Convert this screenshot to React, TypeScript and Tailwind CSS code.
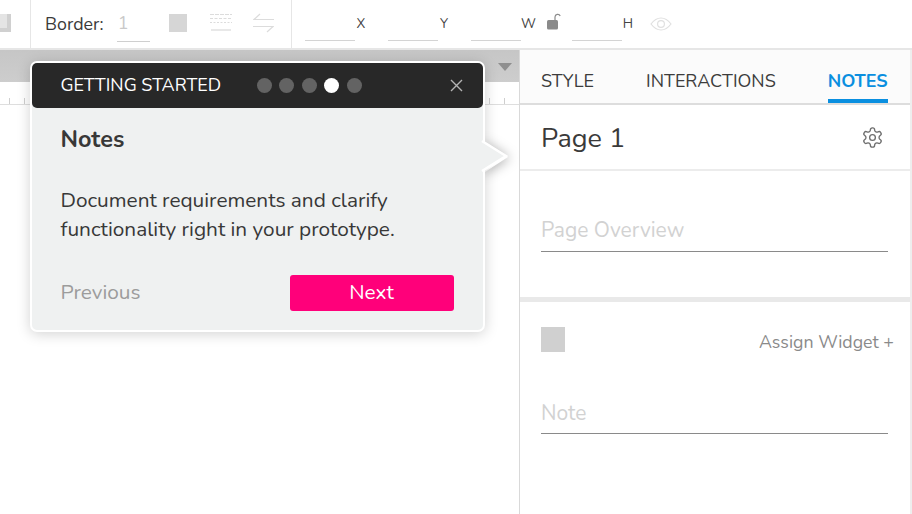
import React from "react";

const font = { fontFamily: '"Nunito","Lato","Open Sans",sans-serif' };

function Field({ label, w = "w-[50px]" }: { label: string; w?: string }) {
  return (
    <div className="flex items-center">
      <div className={`${w} h-[35px] border-b border-[#d4d4d4]`} />
      <span className="w-[12px] text-center text-[13.5px] leading-none text-[#444]">{label}</span>
    </div>
  );
}

function Toolbar() {
  return (
    <div className="flex h-[50px] shrink-0 border-b-2 border-[#e6e6e6] bg-white">
      <div className="relative w-[31px] border-r border-[#e6e6e6]">
        <div className="absolute left-0 top-[14px] h-[18px] w-[11px] bg-[#d0d0d0]" />
        <div className="absolute left-0 top-[14px] h-[14px] w-[7px] bg-[#e4e4e4]" />
      </div>
      <div className="flex w-[261px] items-center border-r border-[#e6e6e6]">
        <span className="ml-[14px] text-[17.8px] text-[#3a3a3a]">Border:</span>
        <div className="relative ml-[13px] h-[35px] w-[33px] border-b border-[#cfcfcf]">
          <span className="absolute left-[1px] top-[5px] text-[18px] leading-[22px] text-[#c9c9c9]">1</span>
        </div>
        <div className="ml-[19px] mb-[2px] h-[18px] w-[18px] bg-[#d6d6d6]" />
        <svg className="ml-[23px] mb-[2px]" width="22" height="18" viewBox="0 0 22 18" fill="none" stroke="#dcdcdc" strokeWidth="1">
          <path d="M0 0.5H22" strokeDasharray="4 1" />
          <path d="M0 4.5H22" strokeDasharray="3 1.5" />
          <path d="M0 8.5H22" strokeDasharray="2 1.5" />
          <path d="M1 16H21" strokeWidth="1.3" />
        </svg>
        <svg className="ml-[21px] mb-[2px]" width="21" height="20" viewBox="0 0 21 20" fill="none" stroke="#dcdcdc" strokeWidth="1.2">
          <path d="M21 6.5H1L7 1" />
          <path d="M0 13.5H20L14 19" />
        </svg>
      </div>
      <div className="flex items-center pb-[1px]">
        <div className="ml-[13px]"><Field label="X" /></div>
        <div className="ml-[21px]"><Field label="Y" /></div>
        <div className="ml-[21px]"><Field label="W" /></div>
        <svg className="ml-[13px] mt-[-4px]" width="15" height="18" viewBox="0 0 15 18">
          <path d="M9 7V4a2.7 2.7 0 0 1 5.2-1" fill="none" stroke="#8a8a8a" strokeWidth="1.2" />
          <rect x="1" y="7" width="11" height="9.5" rx="1.5" fill="#8a8a8a" />
        </svg>
        <div className="ml-[11px]"><Field label="H" /></div>
        <svg className="ml-[16px]" width="22" height="14" viewBox="0 0 22 14" fill="none" stroke="#e0e0e0" strokeWidth="1.2">
          <path d="M1 7C4 3 7 1 11 1s7 2 10 6c-3 4-6 6-10 6S4 11 1 7Z" />
          <circle cx="11" cy="7" r="3.4" />
        </svg>
      </div>
    </div>
  );
}

function Canvas() {
  const ticks = [9, 24, 489, 504];
  return (
    <div className="relative w-[519px] shrink-0 bg-white">
      <div className="relative h-[32px] bg-gradient-to-b from-[#c6c6c6] to-[#cdcdcd]">
        <div className="absolute left-[498px] top-[13px] h-0 w-0 border-x-[7px] border-t-[8px] border-x-transparent border-t-[#8f8f8f]" />
      </div>
      <div className="relative h-[23px] border-b border-[#dedede]">
        {ticks.map((x) => (
          <div key={x} className="absolute bottom-0 h-[6px] w-px bg-[#cfcfcf]" style={{ left: x }} />
        ))}
      </div>
    </div>
  );
}

function Panel() {
  return (
    <div className="flex min-w-0 flex-1 flex-col border-l border-r-2 border-l-[#d9d9d9] border-r-[#eeeeee] bg-white">
      <div className="flex h-[55px] shrink-0 items-end border-b-2 border-[#dddddd] bg-[#fbfbfb] pl-[21px] text-[18px] text-[#3c3c3c]">
        <span className="pb-[10px] leading-[24px]">STYLE</span>
        <span className="ml-[52px] pb-[10px] leading-[24px]">INTERACTIONS</span>
        <span className="ml-[52px] border-b-[4px] border-[#0a8fe0] pb-[6px] font-bold leading-[24px] text-[#0a8fe0]">NOTES</span>
      </div>
      <div className="flex h-[66px] shrink-0 items-center justify-between border-b-2 border-[#ececec] pl-[21px] pr-[26px] pt-[5px]">
        <span className="text-[27px] text-[#3a3a3a]">Page 1</span>
        <svg className="mt-[-5px]" width="23" height="23" viewBox="0 0 24 24" fill="none" stroke="#6e6e6e" strokeWidth="1.4" strokeLinecap="round" strokeLinejoin="round">
          <path d="M12.22 2h-.44a2 2 0 0 0-2 2v.18a2 2 0 0 1-1 1.73l-.43.25a2 2 0 0 1-2 0l-.15-.08a2 2 0 0 0-2.73.73l-.22.38a2 2 0 0 0 .73 2.73l.15.1a2 2 0 0 1 1 1.72v.51a2 2 0 0 1-1 1.74l-.15.09a2 2 0 0 0-.73 2.73l.22.38a2 2 0 0 0 2.73.73l.15-.08a2 2 0 0 1 2 0l.43.25a2 2 0 0 1 1 1.73V20a2 2 0 0 0 2 2h.44a2 2 0 0 0 2-2v-.18a2 2 0 0 1 1-1.73l.43-.25a2 2 0 0 1 2 0l.15.08a2 2 0 0 0 2.73-.73l.22-.39a2 2 0 0 0-.73-2.73l-.15-.08a2 2 0 0 1-1-1.74v-.5a2 2 0 0 1 1-1.74l.15-.09a2 2 0 0 0 .73-2.73l-.22-.38a2 2 0 0 0-2.73-.73l-.15.08a2 2 0 0 1-2 0l-.43-.25a2 2 0 0 1-1-1.73V4a2 2 0 0 0-2-2z" />
          <circle cx="12" cy="12" r="3" />
        </svg>
      </div>
      <div className="h-[131px] shrink-0 border-b-[5px] border-[#e9e9e9] px-[21px] pt-[43px]">
        <div className="h-[38px] w-[347px] border-b border-[#8a8a8a] text-[21px] leading-[33px] text-[#d2d2d2]">Page Overview</div>
      </div>
      <div className="flex items-start justify-between pl-[21px] pr-[16px] pt-[25px]">
        <div className="h-[25px] w-[24px] bg-[#d0d0d0]" />
        <span className="mt-[3px] text-[17.8px] leading-[24px] text-[#8a8a8a]">Assign Widget +</span>
      </div>
      <div className="ml-[21px] mt-[42px] h-[38px] w-[347px] border-b border-[#8a8a8a] text-[21px] leading-[35px] text-[#d2d2d2]">Note</div>
    </div>
  );
}

function Tour() {
  return (
    <div className="absolute left-[30px] top-[61px] h-[271px] w-[455px]">
      <svg className="absolute left-[452px] top-[78.5px] overflow-visible" width="26" height="34" viewBox="0 0 26 34">
        <path d="M0 0L26 17L0 34Z" fill="#ffffff" style={{ filter: "drop-shadow(2px 1px 6px rgba(0,0,0,0.3))" }} />
      </svg>
      <div className="relative h-full rounded-[7px] border-[2.5px] border-white bg-[#eff1f1] shadow-[0_2px_14px_rgba(0,0,0,0.18)]">
        <div className="flex h-[45px] items-center rounded-[5px] bg-[#282828] pl-[28.5px] text-white">
          <span className="w-[196px] text-[18px]">GETTING STARTED</span>
          <div className="flex gap-[7.5px]">
            <span className="h-[15px] w-[15px] rounded-full bg-[#636363]" />
            <span className="h-[15px] w-[15px] rounded-full bg-[#636363]" />
            <span className="h-[15px] w-[15px] rounded-full bg-[#636363]" />
            <span className="h-[15px] w-[15px] rounded-full bg-white" />
            <span className="h-[15px] w-[15px] rounded-full bg-[#636363]" />
          </div>
          <svg className="ml-[88px]" width="13" height="13" viewBox="0 0 13 13" stroke="#b4b4b4" strokeWidth="1.4">
            <path d="M1 1L12 12M12 1L1 12" />
          </svg>
        </div>
        <div className="px-[28.5px]">
          <div className="pt-[15px] text-[23.4px] font-bold leading-[32px] text-[#383838]">Notes</div>
          <div className="mt-[31px] text-[20.8px] leading-[28.5px] text-[#383838]">
            Document requirements and clarify
            <br />
            functionality right in your prototype.
          </div>
          <div className="mt-[32px] flex items-center justify-between">
            <span className="text-[20.8px] text-[#9c9c9c]">Previous</span>
            <span className="mr-[1px] flex h-[36px] w-[164px] items-center justify-center rounded-[3px] bg-[#ff007a] text-[20.8px] text-white">Next</span>
          </div>
        </div>
        <svg className="absolute left-[449.5px] top-[76px] overflow-visible" width="26" height="34" viewBox="0 0 26 34">
          <path d="M0 2L24 17L0 32Z" fill="#eff1f1" />
          <path d="M0 2L24 17L0 32" fill="none" stroke="#ffffff" strokeWidth="2.5" />
        </svg>
      </div>
    </div>
  );
}

export default function App() {
  return (
    <div className="relative flex h-[514px] w-[912px] flex-col overflow-hidden bg-white" style={font}>
      <Toolbar />
      <div className="flex min-h-0 flex-1">
        <Canvas />
        <Panel />
      </div>
      <Tour />
    </div>
  );
}
